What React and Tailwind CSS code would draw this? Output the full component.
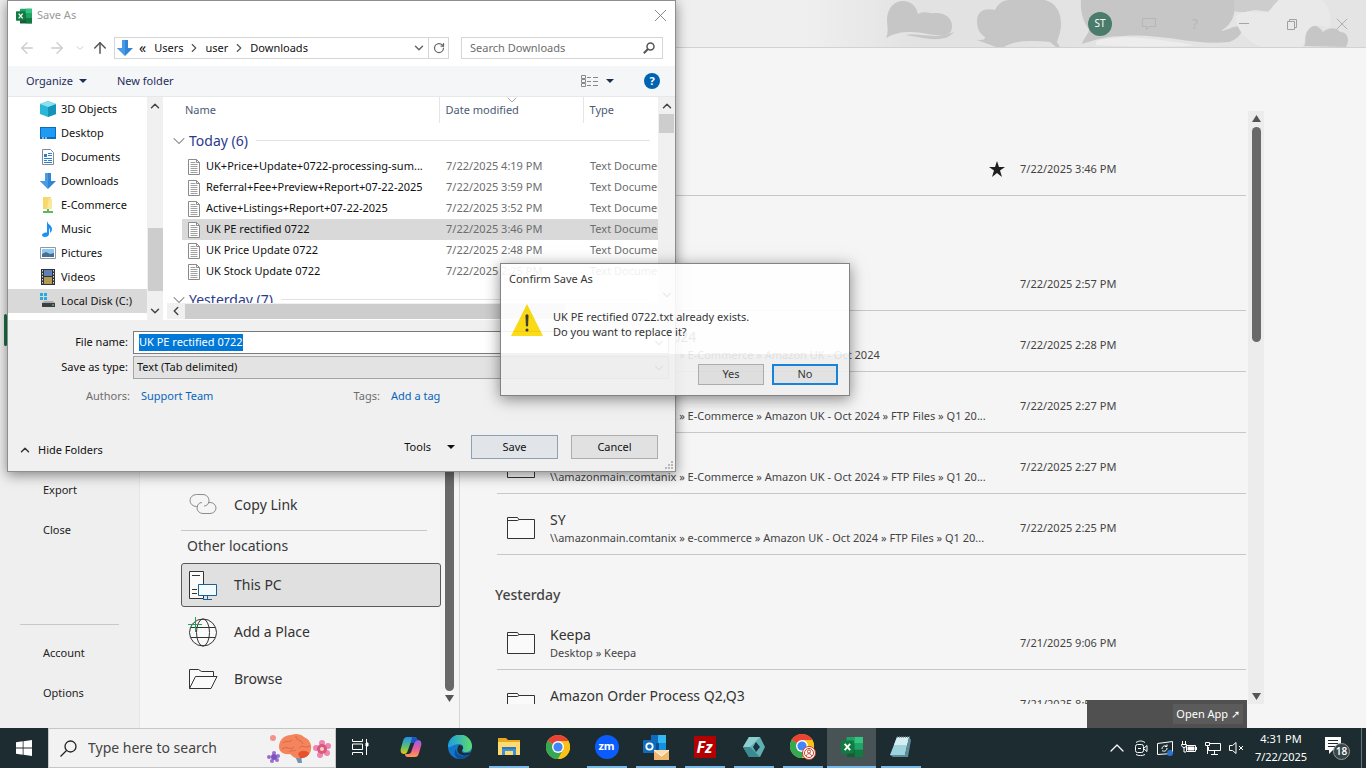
import { useEffect, useRef } from "react";
import {
  ArrowLeft,
  ArrowRight,
  ArrowUp,
  ChevronDown,
  ChevronLeft,
  ChevronRight,
  ChevronUp,
  RotateCw,
  Search,
  X,
} from "lucide-react";

const SHARE = "\\\\amazonmain.comtanix";

const todayFolders = [
  { date: "7/22/2025 2:57 PM" },
  { name: "Amazon UK - Oct 2024", path: `${SHARE} » E-Commerce » Amazon UK - Oct 2024`, date: "7/22/2025 2:28 PM" },
  { path: `${SHARE} » E-Commerce » Amazon UK - Oct 2024 » FTP Files » Q1 20...`, date: "7/22/2025 2:27 PM" },
  { path: `${SHARE} » E-Commerce » Amazon UK - Oct 2024 » FTP Files » Q1 20...`, date: "7/22/2025 2:27 PM" },
  { name: "SY", path: `${SHARE} » e-commerce » Amazon UK - Oct 2024 » FTP Files » Q1 20...`, date: "7/22/2025 2:25 PM" },
];

const yesterdayFolders = [
  { name: "Keepa", path: "Desktop » Keepa", date: "7/21/2025 9:06 PM" },
  { name: "Amazon Order Process Q2,Q3", date: "7/21/2025 8:50 PM" },
];

const files = [
  { name: "UK+Price+Update+0722-processing-sum...", date: "7/22/2025 4:19 PM" },
  { name: "Referral+Fee+Preview+Report+07-22-2025", date: "7/22/2025 3:59 PM" },
  { name: "Active+Listings+Report+07-22-2025", date: "7/22/2025 3:52 PM" },
  { name: "UK PE rectified 0722", date: "7/22/2025 3:46 PM", selected: true },
  { name: "UK Price Update 0722", date: "7/22/2025 2:48 PM" },
  { name: "UK Stock Update 0722", date: "7/22/2025 2:25 PM" },
];

/* ---------- small icons ---------- */

function ExcelIcon({ className }) {
  return (
    <svg viewBox="0 0 24 24" className={className} aria-hidden="true">
      <rect x="6" y="1" width="18" height="22" rx="1" fill="#21a366" />
      <rect x="15" y="1" width="9" height="7" fill="#33c481" />
      <rect x="6" y="8" width="9" height="7" fill="#107c41" />
      <rect x="6" y="15" width="18" height="8" fill="#185c37" />
      <rect x="15" y="8" width="9" height="7" fill="#21a366" />
      <rect x="15" y="15" width="9" height="8" fill="#107c41" />
      <rect x="0" y="5" width="14" height="14" rx="1" fill="#107c41" />
      <path d="M4 8.5l6 7M10 8.5l-6 7" stroke="#fff" strokeWidth="2" />
    </svg>
  );
}

function DownArrowIcon() {
  return (
    <svg viewBox="0 0 16 16" className="size-4 shrink-0" aria-hidden="true">
      <path d="M5 0h6v8h5l-8 8-8-8h5z" fill="#2f86d6" />
      <path d="M5 0h3v15L0 8h5z" fill="#4a9be3" />
    </svg>
  );
}

function Caret({ className = "h-1 w-2" }) {
  return (
    <svg viewBox="0 0 8 4" preserveAspectRatio="none" className={`shrink-0 ${className}`} aria-hidden="true">
      <path d="M0 0h8L4 4z" fill="currentColor" />
    </svg>
  );
}

function FileIcon() {
  return (
    <svg viewBox="0 0 12 16" className="h-4 w-3 shrink-0" aria-hidden="true">
      <path d="M.5.5h8l3 3v12H.5z" fill="#fff" stroke="#8a8a8a" />
      <path d="M8.5.5v3h3" fill="none" stroke="#8a8a8a" />
      <path d="M2.5 3.5h5M2.5 5.5h7M2.5 7.5h7M2.5 9.5h7M2.5 11.5h7M2.5 13.5h7" stroke="#a0a0a0" />
    </svg>
  );
}

function FolderIcon() {
  return (
    <svg viewBox="0 0 28 22" className="h-[22px] w-7 shrink-0" fill="#fafafa" stroke="#333" aria-hidden="true">
      <path d="M.5 21.5V.5h10l1.500 2h15.500v19z" />
      <path d="M.5 3.500h10l1.500-1" fill="none" />
    </svg>
  );
}

const treeItems = [
  {
    name: "3D Objects",
    icon: (
      <>
        <path d="M8 0l8 3v10l-8 3-8-3V3z" fill="#29b6d8" />
        <path d="M8 6l8-3v10l-8 3z" fill="#1593b8" />
        <path d="M0 3l8-3 8 3-8 3z" fill="#8be0f0" />
      </>
    ),
  },
  {
    name: "Desktop",
    icon: (
      <>
        <path d="M0 2h16v12H0z" fill="#0f6cbd" />
        <path d="M1 3h14v9H1z" fill="#1e9bf5" />
        <path d="M2 13h2M5 13h2" stroke="#fff" />
      </>
    ),
  },
  {
    name: "Documents",
    icon: (
      <>
        <path d="M2.500.5h8l3 3v12h-11z" fill="#fff" stroke="#7f8a94" />
        <path d="M4 5h3v3H4z" fill="#2b7cd3" />
        <path d="M8 4.500h4M8 6.500h4M4 9.500h8M4 11.500h3M8 11.500h4M4 13.500h8" stroke="#2b7cd3" />
      </>
    ),
  },
  { name: "Downloads" },
  {
    name: "E-Commerce",
    icon: (
      <>
        <path d="M3 0h8v12H3z" fill="#f6d86b" />
        <path d="M9 1l3 1v10H7z" fill="#fbe79a" />
        <path d="M7 12h2v2h4v2H3v-2h4z" fill="#5cb85c" />
      </>
    ),
  },
  {
    name: "Music",
    icon: (
      <path d="M7 0c1 4 5 4 5 8 0 2-1 3-2 4 0-3 0-4-1-5v6c0 2-2 3-4 3s-3-1-3-2 2-3 5-2.500z" fill="#1e90f0" />
    ),
  },
  {
    name: "Pictures",
    icon: (
      <>
        <path d="M.5 2.500h15v11H.5z" fill="#fff" stroke="#8b98a5" />
        <path d="M2 4h12v8H2z" fill="#8cc8f0" />
        <path d="M2 9l4-2 4 2 4-1v4H2z" fill="#4a6f8c" />
      </>
    ),
  },
  {
    name: "Videos",
    icon: (
      <>
        <path d="M1 0h14v16H1z" fill="#333" />
        <path d="M4 1h8v6H4z" fill="#5f7fb8" />
        <path d="M4 8h8v7H4z" fill="#b29a55" />
        <path d="M2.500 1v15M13.500 1v15" stroke="#ddd" strokeDasharray="1.500 1.500" />
      </>
    ),
  },
  {
    name: "Local Disk (C:)",
    selected: true,
    icon: (
      <>
        <path d="M0 0h3v3H0zM4 0h3v3H4zM0 4h3v3H0zM4 4h3v3H4z" fill="#29a9e0" />
        <path d="M4 8h9l2 2H2z" fill="#a8adb0" />
        <path d="M2 10h13v4H2z" fill="#3b3f42" />
        <path d="M12 12h2" stroke="#7ee07e" />
      </>
    ),
  },
];

/* ---------- backstage ---------- */

function HeaderArt() {
  return (
    <svg viewBox="0 0 560 47" className="h-[47px] w-[560px]" aria-hidden="true">
      <defs>
        <linearGradient id="fade" x1="0" x2="1">
          <stop offset="0" stopColor="#efefef" />
          <stop offset="0.2" stopColor="#e2e2e2" />
          <stop offset="1" stopColor="#e4e4e4" />
        </linearGradient>
      </defs>
      <path d="M0 0h560v47H0z" fill="url(#fade)" />
      <g fill="#c6c6c6">
        <path d="M80 38c3-6 1-12 1-20C82 8 88 1 97 1c8 0 13 5 15 13 6-4 12 0 16-1 11-1 18 5 18 13 0 6-3 9-8 9-14 1-20-3-33-3-10 0-16 1-25 6z" />
        <path d="M100 35c15-2 28 5 48-3-10 12-29 6-48 3z" />
        <path d="M171 20c1-10 9-12 18-10 3-6 8-10 14-10h36c11 3 16 12 16 24 0 8-3 14-4 18 2 4 3 5 3 5h-4l-6-5c-22-2-36-1-46 5h-8l-19-7c6 0 8 0 8-3-6-4-8-9-8-17z" />
        <path d="M275 0h153c2 12 0 23-13 31 11-2 14-7 20-3 3 5-5 12-12 14-35 4-67-9-105-6-16 0-27 3-42 8 2-7 7-10 7-15-5-5-9-17-8-29z" />
        <path d="M498 46c3-3 0-9 2-14 3-9 12-8 17 0 6-5 14-5 17 0 8 0 10 8 6 15z" />
      </g>
      <path d="M428 0h44l-4 10c-8 4-16-2-24 1-8 2-12 1-16 0z" fill="#cdcdcd" />
      <path d="M290 41c27-8 60-2 100 4-20 2-60 2-100 0z" fill="#ededed" />
      <path d="M430 16c8-8 22-2 32-4 6-6 8-12 14-12h40c8 8 10 16 8 27-6 0-14-4-20 1-6 5-4 12-8 19h-40c-14-6-26-15-26-31z" fill="#e9e9e9" />
    </svg>
  );
}

function BackstageHeader() {
  return (
    <header className="relative flex h-12 shrink-0 items-center justify-end border-b border-[#d2d2d2] bg-[#efefef]">
      <div className="absolute top-0 right-0">
        <HeaderArt />
      </div>
      <div className="relative flex items-center text-[#a5a5a5]">
        <span className="mr-[29px] flex size-6 items-center justify-center rounded-full bg-[#4a7b6b] text-[10px] text-white">
          ST
        </span>
        <button aria-label="Feedback" className="mr-[30px] text-[#b5b5b5]">
          <svg viewBox="0 0 16 16" className="size-4" fill="none" stroke="currentColor">
            <path d="M1.500 2.500h13v8h-6l-3 3v-3h-4z" />
          </svg>
        </button>
        <button aria-label="Help" className="mr-[33px] w-4 text-sm text-[#b8b8b8]">?</button>
        <button aria-label="Minimize" className="mr-8 flex h-4 w-4 items-center justify-center">
          <span className="h-px w-2.5 bg-[#a5a5a5]" />
        </button>
        <button aria-label="Restore" className="mr-8">
          <svg viewBox="0 0 16 16" className="size-4" fill="none" stroke="#a0a0a0">
            <path d="M3.500 5.500h7v8h-7zM5.500 5.500v-2h7v8h-2" />
          </svg>
        </button>
        <button aria-label="Close window" className="mr-[14px]">
          <X className="size-5" strokeWidth={1} />
        </button>
      </div>
    </header>
  );
}

function BackstageNav() {
  return (
    <nav className="flex w-[140px] shrink-0 flex-col border-r border-[#e6e6e6] bg-[#efefef] text-[11px] text-[#222]">
      <div className="pt-[310px]">
        <div className="flex h-10 items-center pl-1" aria-current="page">
          <span className="h-8 w-[3px] rounded-sm bg-[#1a7246]" />
        </div>
      </div>
      <div className="mt-[120px] flex flex-col">
        <button className="h-10 pl-[43px] text-left">Export</button>
        <button className="h-10 pl-[43px] text-left">Close</button>
      </div>
      <div className="mx-5 mt-auto mb-2 border-t border-[#c8c8c8]" />
      <div className="mb-[15px] flex flex-col">
        <button className="h-10 pl-[43px] text-left">Account</button>
        <button className="h-10 pl-[43px] text-left">Options</button>
      </div>
    </nav>
  );
}

function PlaceButton({ label, active, children }) {
  return (
    <button
      className={`flex h-11 items-center gap-4 rounded-[3px] border pl-1.5 text-left text-sm text-[#333] ${
        active ? "border-[#5a5a5a] bg-[#e0e0e0]" : "border-transparent"
      }`}
    >
      <svg viewBox="0 0 30 30" className="size-[30px]" fill="none" stroke="#333" aria-hidden="true">
        {children}
      </svg>
      {label}
    </button>
  );
}

function Places() {
  return (
    <section className="flex w-80 shrink-0 border-r border-[#d6d6d6]">
      <div className="flex flex-1 flex-col justify-end gap-[3px] pb-[27px] pl-[41px]">
        <PlaceButton label="Copy Link">
          <g stroke="#8c8c8c">
            <path d="M10 16.500H8.500a6.500 6 0 0 1 0-12H15a6 6 0 0 1 6 6 5 5 0 0 1-5 5.500" />
            <path d="M20 12.500h2a6 5.500 0 0 1 0 11h-7a6 5.500 0 0 1-6-5.500c0-3 2-5.500 5-5.500" />
          </g>
        </PlaceButton>
        <div className="mr-[14px] border-t border-[#c8c8c8]" />
        <h2 className="flex h-[26px] items-center pb-0.5 pl-1.5 text-sm text-[#3b3b3b]">Other locations</h2>
        <PlaceButton label="This PC" active>
          <path d="M1.500 1.500h14v27h-14z" fill="#fafafa" />
          <path d="M4 5.500h8M4 19.500h5M4 23.500h5" />
          <path d="M10.500 14.500h18v11h-18z" fill="#f4fbff" stroke="#1b5f94" />
          <path d="M19.500 26v3M15 29.500h9" stroke="#1b5f94" />
        </PlaceButton>
        <PlaceButton label="Add a Place">
          <circle cx="15" cy="15.500" r="13.500" fill="#fafafa" />
          <ellipse cx="15" cy="15.500" rx="6.500" ry="13.500" />
          <path d="M3 10.500h24M3 20.500h24" />
          <path d="M0 7.500h14M7.500 0v15" stroke="#23a055" />
        </PlaceButton>
        <PlaceButton label="Browse">
          <path d="M1.500 24.500v-19h9l3 2h12v5" fill="#fafafa" />
          <path d="M1.500 24.500l6-12h21.500l-6 12z" fill="#fafafa" />
        </PlaceButton>
      </div>
      <div className="flex w-[18px] flex-col items-center pr-px pb-[26px]">
        <span className="w-[9px] flex-1 rounded-b-full bg-[#696969]" />
        <Caret className="mt-1 h-[7px] w-[9px] text-[#555]" />
      </div>
    </section>
  );
}

function FolderRow({ folder, pinned }) {
  return (
    <li className="h-[61px] border-b border-[#c8c8c8]">
      <a href="#folder" className="flex h-full items-center pt-2 pl-2.5">
        <FolderIcon />
        <span className="ml-[15px] flex min-w-0 flex-1 flex-col">
          <span className="h-5 truncate text-sm leading-5 text-[#333]">{folder.name}</span>
          <span className="h-4 truncate text-[11px] leading-4 text-[#444]">{folder.path}</span>
        </span>
        <span className="w-[31px] shrink-0">
          {pinned && (
            <svg viewBox="0 0 16 16" className="size-4" aria-label="Pinned">
              <path d="M8 0l2 6h6l-5 3.500 2 6.500-5-4-5 4 2-6.500L0 6h6z" fill="#1f1f1f" />
            </svg>
          )}
        </span>
        <span className="w-[226px] shrink-0 text-[11px] text-[#444]">{folder.date}</span>
      </a>
    </li>
  );
}

function RecentFolders() {
  return (
    <section className="mt-[63px] mb-6 ml-[35px] flex min-w-0 flex-1 overflow-hidden">
      <div className="min-w-0 flex-1 overflow-hidden pt-6">
        <ul className="ml-0.5">
          <FolderRow folder={{ date: "7/22/2025 3:46 PM" }} pinned />
        </ul>
        <ul className="mt-[54px] ml-0.5">
          {todayFolders.map((folder, i) => (
            <FolderRow key={i} folder={folder} />
          ))}
        </ul>
        <h2 className="flex h-[54px] items-end pb-1 text-sm font-medium text-[#444]">Yesterday</h2>
        <ul className="ml-0.5">
          {yesterdayFolders.map((folder) => (
            <FolderRow key={folder.name} folder={folder} />
          ))}
        </ul>
      </div>
      <div className="ml-0.5 flex w-4 flex-col items-center bg-[#ececec] py-1">
        <Caret className="h-[7px] w-[9px] rotate-180 text-[#555]" />
        <span className="mt-[5px] h-[215px] w-[9px] rounded-full bg-[#696969]" />
        <Caret className="mt-auto h-[7px] w-[9px] text-[#555]" />
      </div>
    </section>
  );
}

/* ---------- save dialog ---------- */

function AddressBar() {
  return (
    <div className="flex h-9 items-center text-[#111]">
      <div className="flex w-[106px] shrink-0 items-center">
        <ArrowLeft className="ml-2.5 size-[18px] text-[#ccc]" strokeWidth={1.75} />
        <ArrowRight className="ml-3 size-[18px] text-[#ccc]" strokeWidth={1.75} />
        <ChevronDown className="ml-2 size-[12px] text-[#ccc]" />
        <ArrowUp className="ml-[5px] size-[18px] text-[#555]" />
      </div>
      <div className="flex h-[22px] flex-1 items-center border border-[#d5d5d5] pl-0.5">
        <DownArrowIcon />
        <span className="ml-1.5 text-sm leading-none">«</span>
        <button className="ml-2">Users</button>
        <ChevronRight className="mx-1 size-[14px] text-[#555]" />
        <button>user</button>
        <ChevronRight className="mx-1 size-[14px] text-[#555]" />
        <button>Downloads</button>
        <button aria-label="Previous locations" className="mr-0.5 ml-auto text-[#666]">
          <ChevronDown className="size-[14px]" strokeWidth={2.5} />
        </button>
        <button aria-label="Refresh" className="flex h-full w-5 items-center justify-center border-l border-[#d5d5d5] text-[#666]">
          <RotateCw className="size-3" strokeWidth={2.5} />
        </button>
      </div>
      <label className="mr-3 ml-3 flex h-[22px] w-[202px] items-center border border-[#d5d5d5] pr-[7px] pl-2">
        <input
          type="search"
          aria-label="Search Downloads"
          placeholder="Search Downloads"
          className="min-w-0 flex-1 outline-none placeholder:text-[#6d6d6d]"
        />
        <svg viewBox="0 0 12 12" className="size-3" fill="none" stroke="#555" strokeWidth="1.5" aria-hidden="true">
          <circle cx="7.500" cy="4.500" r="3.500" />
          <path d="M5 7L.8 11.200" strokeWidth="2" />
        </svg>
      </label>
    </div>
  );
}

function DialogToolbar() {
  return (
    <div className="flex h-[31px] items-center border-b border-[#e6e8ea] bg-[#f5f6f7] text-[#1e2f5c]">
      <button className="ml-[18px] flex items-center gap-1.5">
        Organize <Caret />
      </button>
      <button className="ml-[30px]">New folder</button>
      <button aria-label="Change view" className="ml-auto flex items-center gap-2 text-[#888]">
        <svg viewBox="0 0 17 13" className="h-[13px] w-[17px]" fill="none" stroke="currentColor">
          <path d="M.5.5h4v3h-4zM.5 4.500h4v3h-4zM.5 8.500h4v3h-4z" />
          <path d="M6 2.500h4M12 2.500h5M6 6.500h4M12 6.500h5M6 10.500h4M12 10.500h5" />
        </svg>
        <Caret className="h-1 w-2 text-[#1e2f4c]" />
      </button>
      <button
        aria-label="Get help"
        className="mr-[15px] ml-[30px] flex size-4 items-center justify-center rounded-full bg-[#0063b1] text-[11px] font-bold text-white"
      >
        ?
      </button>
    </div>
  );
}

function FolderTree() {
  return (
    <div className="flex w-[157px] shrink-0">
      <ul className="w-[139px] text-[#111]">
        {treeItems.map((item) => (
          <li key={item.name} className={item.selected ? "bg-[#d9d9d9]" : ""}>
            <button className="flex h-6 w-full items-center gap-[5px] pl-8 text-left whitespace-nowrap">
              {item.icon ? (
                <svg viewBox="0 0 16 16" className="size-4 shrink-0" aria-hidden="true">
                  {item.icon}
                </svg>
              ) : (
                <DownArrowIcon />
              )}
              {item.name}
            </button>
          </li>
        ))}
      </ul>
      <div className="flex w-4 flex-col items-center bg-[#f0f0f0] py-0.5 text-[#444]">
        <ChevronUp className="size-[14px]" strokeWidth={2.5} />
        <span className="mt-auto h-[63px] w-[15px] bg-[#cdcdcd]" />
        <ChevronDown className="mt-[13px] size-[14px]" strokeWidth={2.5} />
      </div>
    </div>
  );
}

function GroupRow({ title }) {
  return (
    <tr>
      <td colSpan={3} className="h-[33px] p-0">
        <div className="flex items-center pt-0.5 pr-2 pl-1 text-sm whitespace-nowrap text-[#2b3a8c]">
          <ChevronDown className="size-5 text-[#777]" strokeWidth={1.25} />
          {title}
          <span className="ml-2 h-px flex-1 bg-[#e2e2e2]" />
        </div>
      </td>
    </tr>
  );
}

function FileList() {
  return (
    <div className="flex min-w-0 flex-1">
      <div className="flex min-w-0 flex-1 flex-col">
        <div className="h-[206px] overflow-hidden">
          <table className="w-full table-fixed border-collapse text-[11px]">
            <colgroup>
              <col className="w-[274px]" />
              <col className="w-36" />
              <col />
            </colgroup>
            <thead>
              <tr className="h-[26px] text-left text-[#4c5a75]">
                <th className="p-0 pl-5 font-normal">Name</th>
                <th className="relative border-l border-[#e5e5e5] p-0 pl-1.5 font-normal">
                  <ChevronDown className="absolute -top-[5px] left-[64px] size-4 text-[#999]" strokeWidth={1.25} />
                  Date modified
                </th>
                <th className="border-l border-[#e5e5e5] p-0 pl-1.5 font-normal">Type</th>
              </tr>
            </thead>
            <tbody>
              <GroupRow title="Today (6)" />
              {files.map((file) => (
                <tr key={file.name} className="h-[21px] text-[#6d6d6d]">
                  <td className="p-0 pl-[17px]">
                    <div
                      className={`flex h-[21px] items-center gap-1.5 pl-1.5 text-[#111] ${
                        file.selected ? "bg-[#d9d9d9]" : ""
                      }`}
                    >
                      <FileIcon />
                      <span className="whitespace-nowrap">{file.name}</span>
                    </div>
                  </td>
                  <td className={`p-0 pl-[7px] ${file.selected ? "bg-[#d9d9d9]" : ""}`}>{file.date}</td>
                  <td className={`overflow-hidden p-0 pl-[7px] whitespace-nowrap ${file.selected ? "bg-[#d9d9d9]" : ""}`}>
                    Text Document
                  </td>
                </tr>
              ))}
              <GroupRow title="Yesterday (7)" />
            </tbody>
          </table>
        </div>
        <div className="ml-0.5 flex h-4 items-center bg-[#f0f0f0] pr-4 text-[#444]">
          <ChevronLeft className="mx-0.5 size-[14px]" strokeWidth={2.5} />
          <span className="h-[15px] w-[380px] bg-[#cdcdcd]" />
        </div>
      </div>
      <div className="flex w-[17px] flex-col items-center bg-[#f0f0f0] py-0.5 text-[#444]">
        <ChevronUp className="size-[14px]" strokeWidth={2.5} />
        <span className="mt-px h-[19px] w-[15px] bg-[#cdcdcd]" />
        <ChevronDown className="mt-auto mb-4 size-[14px]" strokeWidth={2.5} />
      </div>
    </div>
  );
}

function SaveForm() {
  const nameRef = useRef(null);

  useEffect(() => {
    nameRef.current?.focus();
    nameRef.current?.select();
  }, []);

  return (
    <form className="bg-[#f0f0f0] pt-[11px] text-[#111]" onSubmit={(e) => e.preventDefault()}>
      <div className="flex items-center">
        <label htmlFor="file-name" className="w-[120px] text-right">
          File name:
        </label>
        <div className="mr-1.5 ml-[5px] flex h-[23px] flex-1 items-center border border-[#7a7a7a] bg-white">
          <input
            id="file-name"
            ref={nameRef}
            type="text"
            defaultValue="UK PE rectified 0722"
            className="w-full px-[5px] outline-none selection:bg-[#0078d7] selection:text-white"
          />
          <ChevronDown className="mr-0.5 size-[14px] shrink-0 text-[#555]" />
        </div>
      </div>
      <div className="mt-0.5 flex items-center">
        <label htmlFor="file-type" className="w-[120px] text-right">
          Save as type:
        </label>
        <div className="mr-1.5 ml-[5px] flex h-[23px] flex-1 items-center border border-[#a5a5a5] bg-[#e3e3e3]">
          <select id="file-type" className="w-full appearance-none px-[3px] outline-none">
            <option>Text (Tab delimited)</option>
          </select>
          <ChevronDown className="mr-0.5 size-[14px] shrink-0 text-[#555]" />
        </div>
      </div>
      <div className="mt-[7px] flex h-5 items-center text-[#6d6d6d]">
        <span className="w-[122px] text-right">Authors:</span>
        <button type="button" className="ml-[11px] w-[206px] text-left text-[#0a64bd]">
          Support Team
        </button>
        <span className="w-[33px] text-right">Tags:</span>
        <button type="button" className="ml-[11px] text-[#0a64bd]">
          Add a tag
        </button>
      </div>
      <div className="mt-[29px] flex items-center pb-3">
        <button type="button" className="mt-1.5 ml-2.5 flex items-center gap-1.5">
          <ChevronUp className="size-[14px] text-[#333]" strokeWidth={2.5} />
          Hide Folders
        </button>
        <button type="button" className="ml-auto flex items-center gap-4">
          Tools <Caret />
        </button>
        <button type="submit" className="ml-4 h-6 w-[87px] border border-[#8fa0b3] bg-[#e1e5ea]">
          Save
        </button>
        <button type="button" className="mr-[17px] ml-[13px] h-6 w-[87px] border border-[#adadad] bg-[#e1e1e1]">
          Cancel
        </button>
      </div>
    </form>
  );
}

function SaveDialog() {
  return (
    <div
      role="dialog"
      aria-label="Save As"
      className="absolute top-0 left-[7px] w-[669px] border border-[#8e8e8e] bg-white text-[11px] shadow-[0_3px_12px_rgba(0,0,0,0.45)]"
    >
      <div className="flex h-[29px] items-center">
        <ExcelIcon className="ml-2 size-4" />
        <span className="ml-[5px] text-[#999]">Save As</span>
        <button aria-label="Close dialog" className="mr-1 ml-auto text-[#777]">
          <X className="size-[21px]" strokeWidth={1} />
        </button>
      </div>
      <AddressBar />
      <DialogToolbar />
      <div className="flex h-[223px]">
        <FolderTree />
        <FileList />
      </div>
      <SaveForm />
      <svg viewBox="0 0 9 9" className="absolute right-0.5 bottom-0.5 size-[9px]" aria-hidden="true">
        <path d="M7 1h2v2H7zM7 4h2v2H7zM4 4h2v2H4zM7 7h2v2H7zM4 7h2v2H4zM1 7h2v2H1z" fill="#b8b8b8" />
      </svg>
    </div>
  );
}

function ConfirmDialog() {
  return (
    <div
      role="alertdialog"
      aria-label="Confirm Save As"
      className="absolute top-[263px] left-[500px] w-[350px] border border-[#777] bg-white text-[11px] text-[#222] opacity-90 shadow-[0_3px_14px_rgba(0,0,0,0.5)]"
    >
      <h2 className="flex h-[30px] items-center pl-2">Confirm Save As</h2>
      <div className="flex h-[60px] gap-[10px] pl-2.5">
        <svg viewBox="0 0 32 32" className="mt-2.5 size-8" aria-hidden="true">
          <path d="M16 0l16 32H0z" fill="#fcd800" />
          <path d="M15 11h2l-.4 11h-1.200z" fill="#222" stroke="#222" />
          <circle cx="16" cy="26" r="1.500" fill="#222" />
        </svg>
        <p className="mt-[15px] leading-[15px]">
          UK PE rectified 0722.txt already exists.
          <br />
          Do you want to replace it?
        </p>
      </div>
      <div className="flex h-[41px] items-center justify-end gap-2 bg-[#f0f0f0] pr-[11px]">
        <button className="h-[21px] w-[66px] border border-[#a5a5a5] bg-[#dcdcdc]">Yes</button>
        <button className="h-[21px] w-[66px] border-2 border-[#0078d7] bg-[#e1e1e1]">No</button>
      </div>
    </div>
  );
}

/* ---------- taskbar ---------- */

function TaskButton({ label, open, active, children }) {
  return (
    <button aria-label={label} className={`flex w-[49px] flex-col items-center ${active ? "bg-[#485356]" : ""}`}>
      <span className="flex flex-1 items-center">{children}</span>
      <span className={`h-0.5 ${active ? "w-full" : "w-10"} ${open ? "bg-[#76b9ed]" : ""}`} />
    </button>
  );
}

function ChromeArt() {
  return (
    <>
      <circle cx="12" cy="12" r="12" fill="#fbc116" />
      <path d="M12 12L1.600 6A12 12 0 0 1 22.400 6z" fill="#ea4335" />
      <path d="M12 12L1.600 6A12 12 0 0 0 12 24l5-9z" fill="#34a853" />
      <path d="M12 6h10.400A12 12 0 0 1 12 24l5.200-9z" fill="#fbc116" />
      <circle cx="12" cy="12" r="6" fill="#fff" />
      <circle cx="12" cy="12" r="4.600" fill="#4285f4" />
    </>
  );
}

function BrainArt() {
  return (
    <svg viewBox="0 0 66 36" className="mr-[3px] h-9 w-[66px] shrink-0" aria-hidden="true">
      <path d="M28 24l4 9h4l-1-9z" fill="#6f94b5" />
      <path d="M13 17c0-7 5-12 12-12 5-2 10-1 13 2 5 2 8 7 7 12 0 5-4 8-9 8-5 3-9 0-12-3-6 1-11-2-11-7z" fill="#f4845c" />
      <path d="M32 24c2-4 8-4 11-1 0 3-5 6-9 5z" fill="#e8502e" />
      <path d="M17 13c4-3 6 0 9-3M16 19c5-4 8 2 12-2M30 6c0 5 5 3 7 8M33 18c4-4 6 1 11-2M23 22c3-3 5 0 7-2" fill="none" stroke="#d9694a" />
      <g fill="#9a6fd0">
        <circle cx="8" cy="23" r="2" />
        <circle cx="12" cy="26" r="2" />
        <circle cx="11" cy="30" r="2" />
        <circle cx="6" cy="31" r="2" />
        <circle cx="3" cy="27" r="2" />
        <circle cx="8" cy="27" r="3" fill="#7d52bd" />
      </g>
      <g fill="#ee86ab">
        <circle cx="56" cy="13" r="3" />
        <circle cx="62" cy="16" r="3" />
        <circle cx="61" cy="23" r="3" />
        <circle cx="54" cy="25" r="3" />
        <circle cx="50" cy="18" r="3" />
        <circle cx="56" cy="19" r="5" fill="#d9568a" />
      </g>
      <circle cx="56" cy="19" r="2" fill="#ffd1a8" />
      <circle cx="7" cy="8" r="3" fill="#f0938a" />
    </svg>
  );
}

function Taskbar() {
  return (
    <footer className="flex h-10 shrink-0 bg-[#1c2c30] text-white">
      <button aria-label="Start" className="flex w-12 items-center justify-center">
        <svg viewBox="0 0 16 16" className="size-4" fill="#fff">
          <path d="M0 2.300L6.700 1.300v6.300H0zM7.500 1.200L16 0v7.600H7.500zM0 8.400h6.700v6.300L0 13.700zM7.500 8.400H16V16l-8.500-1.200z" />
        </svg>
      </button>
      <label className="flex w-72 items-center border border-[#c6c6c6] bg-[#f2f2f2] pl-[11px] text-[#333]">
        <svg viewBox="0 0 17 17" className="size-[17px] shrink-0" fill="none" stroke="#222" strokeWidth="1.3" aria-hidden="true">
          <circle cx="10.500" cy="6.500" r="5.500" />
          <path d="M6.500 10.500L.5 16.500" />
        </svg>
        <input
          aria-label="Type here to search"
          placeholder="Type here to search"
          className="ml-[11px] min-w-0 flex-1 text-sm outline-none placeholder:text-[#444]"
        />
        <BrainArt />
      </label>
      <div className="flex pl-px">
        <TaskButton label="Task View">
          <svg viewBox="0 0 18 18" className="-ml-1 size-[18px]" fill="none" stroke="#fff">
            <path d="M1.500 1v2.500h10V1M1.500 17v-2.500h10V17M1.500 6h10v5.500h-10zM15.500 1v16" />
            <path d="M15 5h2v3h-2z" fill="#fff" />
          </svg>
        </TaskButton>
        <TaskButton label="Copilot">
          <svg viewBox="0 0 24 24" className="size-6">
            <defs>
              <linearGradient id="cop1" x1="0" y1="0" x2="0" y2="1">
                <stop offset="0" stopColor="#1f8ff0" />
                <stop offset="0.600" stopColor="#5fc26a" />
                <stop offset="1" stopColor="#f2c510" />
              </linearGradient>
              <linearGradient id="cop2" x1="0" y1="0" x2="0" y2="1">
                <stop offset="0" stopColor="#8a63e8" />
                <stop offset="0.500" stopColor="#e85a9d" />
                <stop offset="1" stopColor="#ff9a4d" />
              </linearGradient>
            </defs>
            <path d="M8 2h7c2 0 3 1 3 3h-3c-2 0-3 1-3.500 3L9 15c-1 3-2 4-4 4-3 0-4-3-3-6l2-7c1-3 2-4 4-4z" fill="url(#cop1)" />
            <path d="M16 22H9c-2 0-3-1-3-3h3c2 0 3-1 3.500-3L15 9c1-3 2-4 4-4 3 0 4 3 3 6l-2 7c-1 3-2 4-4 4z" fill="url(#cop2)" />
            <path d="M13 2h2c2 0 3 1 4 3-2 0-3 1-4 3h-3z" fill="#1b54c8" />
          </svg>
        </TaskButton>
        <TaskButton label="Edge">
          <svg viewBox="0 0 24 24" className="size-6">
            <defs>
              <linearGradient id="edge" x1="0" x2="1">
                <stop offset="0" stopColor="#1b9de2" />
                <stop offset="1" stopColor="#5edb6c" />
              </linearGradient>
            </defs>
            <circle cx="12" cy="12" r="12" fill="#1276c9" />
            <path d="M0 12A12 12 0 0 1 24 11c0 4-3 6-6 6-4 0-4-2-3-3 1-3-1-5-4-5-5 0-9 4-11 3z" fill="url(#edge)" />
            <path d="M8 14c0 5 4 7 8 7 3 0 5-1 6-2-2 3-6 5-10 5-5-1-7-6-4-10z" fill="#0c4f9c" />
            <path d="M11 10c4 0 5 3 3 5-1 2 1 4 5 3 2 0 4-1 4-1-2 4-6 4-9 3-5-1-6-6-3-10z" fill="#1c2c30" />
          </svg>
        </TaskButton>
        <TaskButton label="File Explorer" open>
          <svg viewBox="0 0 22 20" className="h-5 w-[22px]">
            <path d="M0 1h8l2 2h12v15H0z" fill="#e9a820" />
            <path d="M0 5h22v13H0z" fill="#fddb71" />
            <path d="M4 10h14v8h-3v-4H7v4H4z" fill="#3f8fd4" />
            <path d="M4 10h14v2H4z" fill="#2b78bd" />
          </svg>
        </TaskButton>
        <TaskButton label="Chrome">
          <svg viewBox="0 0 24 24" className="size-6">
            <ChromeArt />
          </svg>
        </TaskButton>
        <TaskButton label="Zoom" open>
          <span className="flex size-6 items-center justify-center rounded-full bg-[#0b5cff] pb-0.5 text-[11px] font-bold">zm</span>
        </TaskButton>
        <TaskButton label="Outlook" open>
          <svg viewBox="0 0 26 26" className="size-[26px]">
            <path d="M8 1h15v16H8z" fill="#1490df" />
            <path d="M8 1h7v8H8z" fill="#0f6cbd" />
            <path d="M15 1h8v8h-8z" fill="#35b8f1" />
            <path d="M8 9h8v8H8z" fill="#0a4f94" />
            <rect y="6" width="13" height="13" rx="1" fill="#0f6cbd" />
            <circle cx="6.500" cy="12.500" r="3.200" fill="none" stroke="#fff" strokeWidth="1.800" />
            <path d="M11 16h15v10H11z" fill="#f2b66d" />
            <path d="M11 16l7.500 6 7.500-6" fill="#fbdcae" stroke="#fff" />
          </svg>
        </TaskButton>
        <TaskButton label="FileZilla" open>
          <span className="flex h-[22px] w-[22px] items-center justify-center bg-[#b30000] text-base font-bold italic">Fz</span>
        </TaskButton>
        <TaskButton label="Hexagon app" open>
          <svg viewBox="0 0 24 22" className="h-[22px] w-6">
            <path d="M7 1h11l5 10-5 10H7L1 11z" fill="#5fb0b3" />
            <path d="M7 1h11l-5 5-5 5H1z" fill="#8ccfcd" />
            <path d="M1 11h7l5 5 5 5H7z" fill="#3a8a90" />
            <path d="M14 6l4 5-4 5-3-5z" fill="#17343a" />
          </svg>
        </TaskButton>
        <TaskButton label="Chrome profile" open>
          <svg viewBox="0 0 26 26" className="size-[26px]">
            <ChromeArt />
            <circle cx="19" cy="19" r="6.500" fill="#fff" stroke="#c5402c" />
            <circle cx="19" cy="19" r="4.500" fill="none" stroke="#c5402c" />
            <circle cx="19" cy="17.500" r="1.600" fill="none" stroke="#c5402c" />
            <path d="M16 22c1-3 5-3 6 0" fill="none" stroke="#c5402c" />
          </svg>
        </TaskButton>
        <TaskButton label="Excel" open active>
          <ExcelIcon className="size-[22px]" />
        </TaskButton>
        <TaskButton label="Notepad" open>
          <svg viewBox="0 0 22 22" className="size-[22px]">
            <path d="M7 1h12l-4 18H0z" fill="#9ed3de" />
            <path d="M7 1h12l-2 8H4z" fill="#d5eef2" />
            <path d="M0 19h15l4-18 2 3-3 17H3z" fill="#5d8c99" />
            <path d="M7 1h13" stroke="#6c7a80" strokeWidth="1.500" strokeDasharray="1 1" />
          </svg>
        </TaskButton>
      </div>
      <div className="ml-auto flex items-center">
        <div className="flex items-center gap-2">
          <ChevronUp className="-mr-1 size-6" strokeWidth={1.25} />
          <svg viewBox="0 0 16 16" className="size-4" fill="none" stroke="#fff">
            <path d="M3 2.500C6 .5 9 .5 12 2.500M3 14.500c3 1.500 6 1.500 9 0" />
            <rect x="2.500" y="4.500" width="8" height="8" rx="2" />
            <path d="M11 8l3-2.500v6L11 9M5 8.500h3" />
          </svg>
          <svg viewBox="0 0 16 16" className="size-4" fill="none" stroke="#fff">
            <path d="M.5 3.500l15-2v12l-15 1z" />
            <path d="M5 9c0-3 3-4 5-2.500M10 4.500v2H8M10 8c0 3-3 4-5 2.500" />
            <circle cx="13" cy="13" r="3" fill="#2a74d0" stroke="none" />
          </svg>
          <svg viewBox="0 0 16 16" className="size-4" fill="none" stroke="#fff">
            <path d="M5.500 5.500h9v6h-9zM15.500 7v3" />
            <path d="M7 7h6v3H7z" fill="#fff" />
            <path d="M1.500 1v3M4.500 1v3M.5 4.500h5c0 2-1 3-2.500 3S.5 6.500.5 4.500M3 7v5h2" />
          </svg>
          <svg viewBox="0 0 16 16" className="size-4" fill="none" stroke="#fff">
            <path d="M5 3.500h10.500v7H3.500V7M9.500 11v3M6 14.500h7" />
            <path d="M.5 2.500h4v3h-4zM2.500 6v8" />
          </svg>
          <svg viewBox="0 0 16 16" className="size-4" fill="none" stroke="#fff">
            <path d="M.5 5.500h3l3.500-3v11l-3.500-3h-3zM10 6l4 4M14 6l-4 4" />
          </svg>
        </div>
        <div className="ml-2 flex w-[56px] flex-col text-center text-[11px] leading-[18px]">
          <span>4:31 PM</span>
          <span>7/22/2025</span>
        </div>
        <button aria-label="18 notifications" className="relative ml-4 h-6 w-[25px]">
          <svg viewBox="0 0 25 24" className="h-6 w-[25px]" aria-hidden="true">
            <path d="M0 1h16v13H8l-4 4v-4H0z" fill="#fff" />
            <path d="M3 4.500h10M3 7.500h10M3 10.500h7" stroke="#1c2c30" />
          </svg>
          <span className="absolute right-0 bottom-0 flex size-[17px] items-center justify-center rounded-full border border-[#999] bg-[#37464a] text-[10px] font-semibold">
            18
          </span>
        </button>
        <span className="mr-1 ml-[11px] h-10 w-px bg-[#68767a]" />
      </div>
    </footer>
  );
}

export default function App() {
  return (
    <div className="flex h-screen flex-col overflow-hidden bg-[#f5f5f5] font-['Noto_Sans','Open_Sans',sans-serif]">
      <main className="relative flex min-h-0 flex-1 overflow-hidden">
        <BackstageNav />
        <div className="flex min-w-0 flex-1 flex-col">
          <BackstageHeader />
          <div className="flex min-h-0 flex-1 pr-[102px]">
            <Places />
            <RecentFolders />
          </div>
        </div>
        <div className="absolute right-[119px] bottom-0 flex h-7 w-40 items-center justify-end bg-[#505050] pr-1">
          <button className="h-5 bg-[#5b5b5b] px-[3px] text-[11px] text-white">Open App ➚</button>
        </div>
        <SaveDialog />
        <ConfirmDialog />
      </main>
      <Taskbar />
    </div>
  );
}
